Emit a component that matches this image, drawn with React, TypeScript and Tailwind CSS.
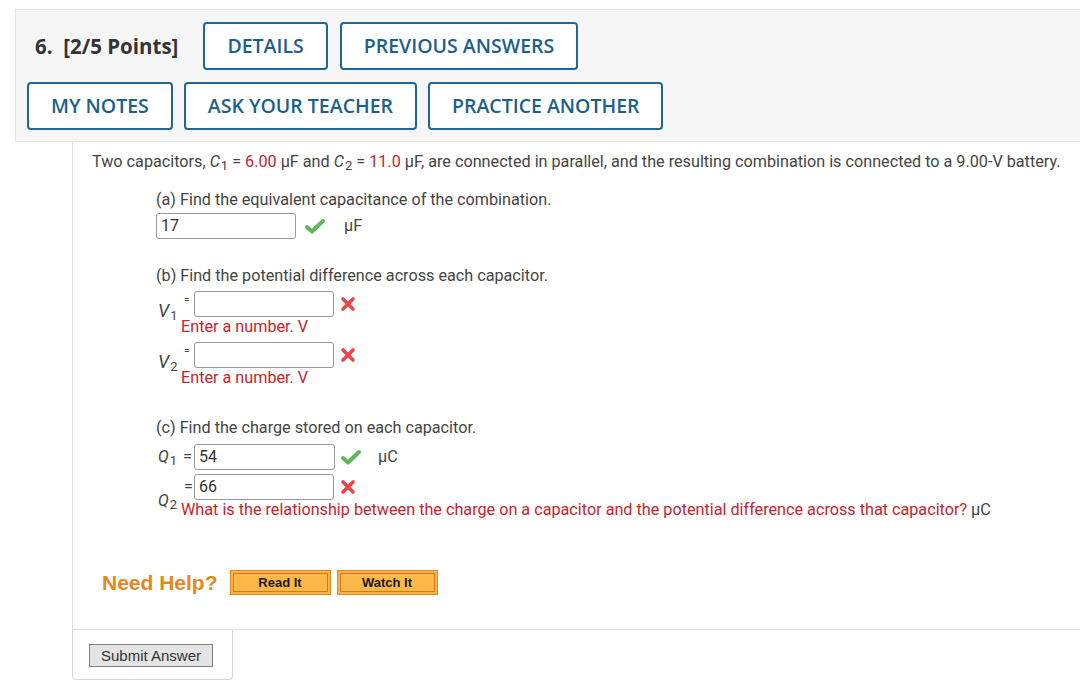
import type { ReactNode } from 'react';

const CheckIcon = () => (
  <svg width="22" height="18" viewBox="0 0 22 18" className="shrink-0">
    <path d="M3 10l5 4.5L19 4" fill="none" stroke="#5cb85c" strokeWidth={4} strokeLinecap="round" strokeLinejoin="round" />
  </svg>
);

const CrossIcon = () => (
  <svg width="16" height="16" viewBox="0 0 16 16" className="shrink-0">
    <path d="M3 3l10 10M13 3L3 13" fill="none" stroke="#e8454a" strokeWidth={3.6} strokeLinecap="round" />
  </svg>
);

function OutlineButton({ children }: { children: ReactNode }) {
  return (
    <button className="h-[48px] px-[22px] border-2 border-[#1e6898] rounded-[4px] bg-white text-[#1b5f8b] text-[19.5px] font-semibold font-['Open_Sans',sans-serif] whitespace-nowrap">
      {children}
    </button>
  );
}

function Var({ v, sub }: { v: string; sub: string }) {
  return (
    <span className="whitespace-nowrap">
      <i>{v}</i>
      <sub className="text-[13px] relative top-[3px] ml-[1px]">{sub}</sub>
    </span>
  );
}

function Input({ value = '', width = 'w-[140px]' }: { value?: string; width?: string }) {
  return (
    <div className={`${width} h-[26px] border border-[#999] rounded-[3px] px-[4px] text-[16px] leading-[24px] text-[#333] bg-white`}>
      {value}
    </div>
  );
}

function HelpButton({ children }: { children: ReactNode }) {
  return (
    <div className="w-[101px] h-[25px] border border-[#e8861e] bg-[#f8b24a] p-[2px]">
      <div className="h-full border border-[#d27a18] bg-[#fbb848] flex items-center justify-center text-[13px] font-bold text-[#1a1a1a] font-['Liberation_Sans',Arial,sans-serif]">
        {children}
      </div>
    </div>
  );
}

export default function App() {
  return (
    <div className="w-[1080px] h-[687px] bg-white overflow-hidden font-['Roboto',sans-serif] text-[#444]">
      {/* Question header */}
      <div className="ml-[15px] mt-[9px] h-[133px] bg-[#f6f6f6] border border-r-0 border-[#e4e4e4]">
        <div className="flex items-center pl-[19px] pt-[12px] gap-[12px]">
          <span className="text-[20.5px] font-bold text-[#333] font-['Open_Sans',sans-serif] mr-[13px] whitespace-nowrap">
            6.&nbsp; [2/5 Points]
          </span>
          <OutlineButton>DETAILS</OutlineButton>
          <OutlineButton>PREVIOUS ANSWERS</OutlineButton>
        </div>
        <div className="flex items-center pl-[11px] pt-[12px] gap-[11px]">
          <OutlineButton>MY NOTES</OutlineButton>
          <OutlineButton>ASK YOUR TEACHER</OutlineButton>
          <OutlineButton>PRACTICE ANOTHER</OutlineButton>
        </div>
      </div>

      {/* Question body */}
      <div className="ml-[72px] border-l border-b border-[#e0e0e0] h-[488px] text-[16.2px] leading-[18px]">
        <p className="pl-[19px] pt-[11px] whitespace-nowrap">
          Two capacitors, <Var v="C" sub="1" /> = <span className="text-[#c8232c]">6.00</span> μF and{' '}
          <Var v="C" sub="2" /> = <span className="text-[#c8232c]">11.0</span> μF, are connected in parallel, and the
          resulting combination is connected to a 9.00-V battery.
        </p>

        <div className="pl-[83px]">
          {/* (a) */}
          <p className="mt-[20px]">(a) Find the equivalent capacitance of the combination.</p>
          <div className="flex items-center mt-[4px]">
            <Input value="17" />
            <span className="ml-[8px]"><CheckIcon /></span>
            <span className="ml-[18px]">μF</span>
          </div>

          {/* (b) */}
          <p className="mt-[28px]">(b) Find the potential difference across each capacitor.</p>
          <div className="flex items-center mt-[6px]">
            <span className="text-[18px] w-[25px] pl-[2px] relative -top-[3px]">
              <Var v="V" sub="1" />
            </span>
            <div>
              <div className="flex items-center">
                <span className="text-[10px] w-[13px] pl-[3px] -mt-[8px]">=</span>
                <Input width="w-[140px]" />
                <span className="ml-[6px]"><CrossIcon /></span>
              </div>
              <p className="text-[#c8232c] mt-[1px]">Enter a number. V</p>
            </div>
          </div>
          <div className="flex items-center mt-[6px]">
            <span className="text-[18px] w-[25px] pl-[2px] relative -top-[3px]">
              <Var v="V" sub="2" />
            </span>
            <div>
              <div className="flex items-center">
                <span className="text-[10px] w-[13px] pl-[3px] -mt-[8px]">=</span>
                <Input width="w-[140px]" />
                <span className="ml-[6px]"><CrossIcon /></span>
              </div>
              <p className="text-[#c8232c] mt-[1px]">Enter a number. V</p>
            </div>
          </div>

          {/* (c) */}
          <p className="mt-[32px]">(c) Find the charge stored on each capacitor.</p>
          <div className="flex items-center mt-[7px]">
            <span className="w-[27px] pl-[2px]">
              <Var v="Q" sub="1" />
            </span>
            <span className="w-[11px]">=</span>
            <Input value="54" width="w-[141px]" />
            <span className="ml-[5px]"><CheckIcon /></span>
            <span className="ml-[16px]">μC</span>
          </div>
          <div className="flex items-center mt-[4px]">
            <span className="w-[25px] pl-[2px] relative top-[4px]">
              <Var v="Q" sub="2" />
            </span>
            <div>
              <div className="flex items-center">
                <span className="w-[13px] pl-[3px]">=</span>
                <Input value="66" width="w-[140px]" />
                <span className="ml-[6px]"><CrossIcon /></span>
              </div>
              <p className="mt-[1px] whitespace-nowrap">
                <span className="text-[#c8232c]">
                  What is the relationship between the charge on a capacitor and the potential difference across that capacitor?
                </span>{' '}
                μC
              </p>
            </div>
          </div>
        </div>

        {/* Need help */}
        <div className="flex items-center pl-[29px] mt-[51px] gap-[6px]">
          <span className="text-[21px] font-bold text-[#e8861a] mr-[6px] font-['Liberation_Sans',Arial,sans-serif]">Need Help?</span>
          <HelpButton>Read It</HelpButton>
          <HelpButton>Watch It</HelpButton>
        </div>
      </div>

      {/* Submit */}
      <div className="ml-[72px] w-[161px] h-[50px] border border-t-0 border-[#d8d8d8] rounded-b-[4px] pl-[16px] pt-[14px]">
        <button className="w-[124px] h-[23px] bg-[#e4e4e4] border border-[#808080] text-[15px] text-[#333] font-['Liberation_Sans',Arial,sans-serif] leading-none">
          Submit Answer
        </button>
      </div>
    </div>
  );
}
